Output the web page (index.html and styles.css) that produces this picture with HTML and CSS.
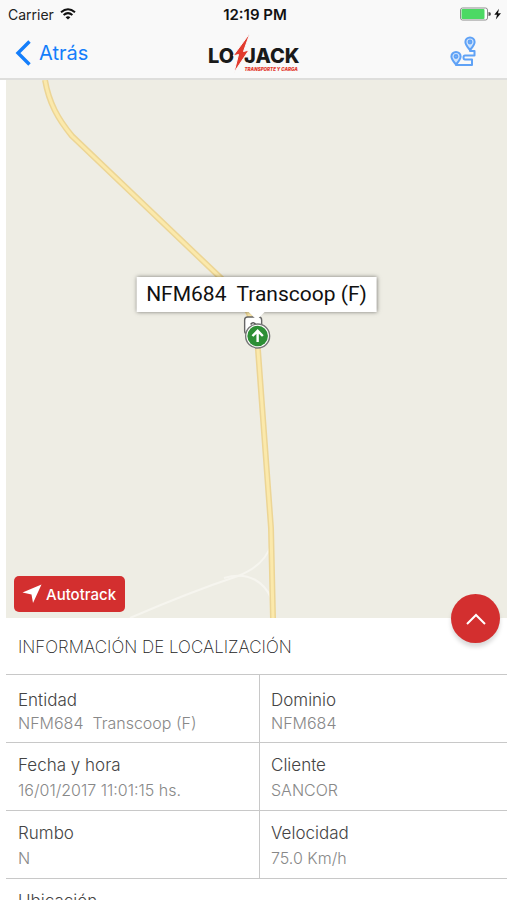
FILE: index.html
```html
<!DOCTYPE html>
<html lang="es">
<head>
    <meta charset="UTF-8">
    <meta name="viewport" content="width=device-width, initial-scale=1.0">
    <title>LoJack - Localización</title>
    <link rel="stylesheet" href="styles.css">
</head>
<body>
    <header class="topbar">
        <div class="status">
            <div class="carrier">
                <span>Carrier</span>
                <svg width="16" height="12" viewBox="0 0 16 12" fill="none" stroke="#111" stroke-width="2">
                    <path d="M1 4.3 Q8 -1.8 15 4.3"/>
                    <path d="M3.6 7 Q8 3.2 12.4 7"/>
                    <path d="M8 11.6 L5.6 9.2 Q8 7.2 10.4 9.2 Z" fill="#111" stroke="none"/>
                </svg>
            </div>
            <span class="time">12:19 PM</span>
            <div class="battery">
                <svg width="42" height="14" viewBox="0 0 42 14">
                    <rect x="0.5" y="1" width="27" height="12" rx="2" fill="#fff" stroke="#8c8c8c"/>
                    <rect x="1.5" y="2" width="23" height="10" rx="1" fill="#4cd964"/>
                    <path d="M28.5 5 Q31 5 31 7 Q31 9 28.5 9 Z" fill="#555"/>
                    <path d="M39 1.8 L34.3 7.8 H37 L35.8 12.4 L41 6.2 H38 Z" fill="#111"/>
                </svg>
            </div>
        </div>
        <nav class="navbar">
            <a class="back" href="#">
                <svg width="16" height="26" viewBox="0 0 16 26" fill="none" stroke="#147efb" stroke-width="3.4">
                    <path d="M14.5 1.5 L3 13 L14.5 24.5"/>
                </svg>
                Atrás
            </a>
            <svg class="logo" width="92" height="40" viewBox="0 0 184 80" role="img" aria-label="LoJack Transporte y Carga">
                <text class="logo-name" x="0" y="60">LO</text>
                <text class="logo-name" x="72" y="60">JACK</text>
                <path d="M84 0 L50 46 L61 43 L52 79 L82 34 L71 37 Z" fill="#e23b2e" stroke="#f9f9f9" stroke-width="2"/>
                <text class="logo-sub" x="73" y="75">TRANSPORTE Y CARGA</text>
            </svg>
            <button class="route" type="button" aria-label="Recorrido">
                <svg width="28" height="34" viewBox="0 0 28 34" fill="none" stroke="#5fa2f6" stroke-width="2" stroke-linejoin="round">
                    <path d="M20 14 C18 11.500 15.400 9 15.400 6 A4.600 4.600 0 0 1 24.600 6 C24.600 9 22 11.500 20 14 Z" fill="#cfe3fc"/>
                    <circle cx="20" cy="6" r="1.400"/>
                    <path d="M6 28.500 C4 26 1.400 23.500 1.400 20.500 A4.600 4.600 0 0 1 10.600 20.500 C10.600 23.500 8 26 6 28.500 Z" fill="#cfe3fc"/>
                    <circle cx="6" cy="20.500" r="1.400"/>
                    <path d="M20 14 V15 H24.500 V19.500 H15 Q13.500 19.500 13.500 21.500 Q13.500 23.500 15 23.500 H22 V29 H6 V27"/>
                </svg>
            </button>
        </nav>
    </header>

    <main>
        <section class="map">
            <svg class="roads" viewBox="0 0 501 538" fill="none">
                <path d="M124 538 C170 518 205 505 232 496 Q258 486 265 465" stroke="#f6f5ef" stroke-width="2"/>
                <path d="M218 498 C244 490 259 504 265 518" stroke="#f6f5ef" stroke-width="2"/>
                <path class="road-edge" d="M39 0 C43 23 52 39 66 56 L219 202 Q250 230 252 270 L265 448 L267 538"/>
                <path class="road-fill" d="M39 0 C43 23 52 39 66 56 L219 202 Q250 230 252 270 L265 448 L267 538"/>
            </svg>
            <div class="marker">
                <div class="tooltip">NFM684  Transcoop (F)</div>
                <svg class="pin" width="32" height="36" viewBox="0 0 32 36" fill="none">
                    <rect x="4" y="2" width="17" height="17" rx="3" fill="#fff" stroke="#666" stroke-width="1.4"/>
                    <path d="M10 9.500 Q12.500 6 15 9.500" stroke="#555" stroke-width="1.6"/>
                    <circle cx="17" cy="21" r="12" fill="#fff" stroke="#777" stroke-width="1.4"/>
                    <circle cx="17" cy="21" r="10.300" fill="#2d8f35"/>
                    <path d="M17 27 V16 M11.800 21 L17 15.800 L22.200 21" stroke="#fff" stroke-width="2.400"/>
                </svg>
            </div>
            <button class="autotrack" type="button">
                <svg width="20" height="20" viewBox="0 0 20 20" fill="#fff">
                    <path d="M19.500 0.500 L11 19 L9.500 10.500 L0.500 8.500 Z"/>
                </svg>
                Autotrack
            </button>
            <button class="expand" type="button" aria-label="Mostrar más">
                <svg width="22" height="14" viewBox="0 0 22 14" fill="none" stroke="#fff" stroke-width="2">
                    <path d="M2 12 L11 3 L20 12"/>
                </svg>
            </button>
        </section>

        <section class="info">
            <h2>INFORMACIÓN DE LOCALIZACIÓN</h2>
            <dl class="details">
                <div class="field compact">
                    <dt>Entidad</dt>
                    <dd>NFM684  Transcoop (F)</dd>
                </div>
                <div class="field compact">
                    <dt>Dominio</dt>
                    <dd>NFM684</dd>
                </div>
                <div class="field">
                    <dt>Fecha y hora</dt>
                    <dd>16/01/2017 11:01:15 hs.</dd>
                </div>
                <div class="field">
                    <dt>Cliente</dt>
                    <dd>SANCOR</dd>
                </div>
                <div class="field">
                    <dt>Rumbo</dt>
                    <dd>N</dd>
                </div>
                <div class="field">
                    <dt>Velocidad</dt>
                    <dd>75.0 Km/h</dd>
                </div>
                <div class="field wide">
                    <dt>Ubicación</dt>
                </div>
            </dl>
        </section>
    </main>
</body>
</html>
```

FILE: styles.css
```css
* {
    box-sizing: border-box;
}
body {
    margin: 0;
    height: 100vh;
    display: flex;
    flex-direction: column;
    overflow: hidden;
    background-color: #fff;
    font-family: Inter, "Liberation Sans", sans-serif;
    color: #444;
}
svg {
    display: block;
}
button {
    border: none;
    padding: 0;
    background: none;
    font-family: inherit;
    cursor: pointer;
}
.topbar {
    flex: none;
    background-color: #f9f9f9;
    border-bottom: 2px solid #dededc;
}
.status {
    display: grid;
    grid-template-columns: 1fr auto 1fr;
    align-items: center;
    height: 28px;
    padding: 0 5px 0 8px;
    font-size: 14px;
    color: #222;
}
.carrier {
    display: flex;
    align-items: center;
    gap: 6px;
}
.time {
    font-size: 15px;
    font-weight: 600;
    color: #111;
}
.battery {
    justify-self: end;
}
.navbar {
    display: grid;
    grid-template-columns: 1fr auto 1fr;
    align-items: center;
    height: 50px;
    padding: 0 15px;
}
.back {
    display: flex;
    align-items: center;
    gap: 8px;
    font-size: 20px;
    color: #147efb;
    text-decoration: none;
}
.route {
    justify-self: end;
    margin-right: 14px;
}
.logo-name {
    font-size: 40px;
    font-weight: 800;
    fill: #1a1a1a;
}
.logo-sub {
    font-size: 9px;
    font-weight: 900;
    font-style: italic;
    fill: #e23b2e;
}
main {
    flex: 1;
    min-height: 0;
    overflow: hidden;
    padding-left: 6px;
}
.map {
    position: relative;
    background-color: #eeede4;
}
.roads {
    width: 100%;
}
.road-edge {
    stroke: #ecd595;
    stroke-width: 6;
}
.road-fill {
    stroke: #fbe9ab;
    stroke-width: 3;
}
.marker {
    position: absolute;
    top: 197px;
    left: 50%;
    transform: translateX(-50%);
    display: flex;
    flex-direction: column;
    align-items: center;
    gap: 3px;
}
.tooltip {
    position: relative;
    z-index: 1;
    padding: 0 10px;
    background-color: #fff;
    box-shadow: 0 0 4px rgba(0, 0, 0, 0.5);
    font-family: Roboto, sans-serif;
    font-size: 21px;
    line-height: 35px;
    color: #111;
    white-space: pre;
}
.tooltip::after {
    content: "";
    position: absolute;
    top: 100%;
    left: 50%;
    margin-left: -8px;
    border: 8px solid transparent;
    border-top-color: #fff;
    border-bottom: none;
}
.autotrack {
    position: absolute;
    left: 8px;
    bottom: 6px;
    display: flex;
    align-items: center;
    gap: 4px;
    height: 36px;
    padding: 0 9px 0 8px;
    border-radius: 5px;
    background-color: #d32f2f;
    color: #fff;
    font-size: 15px;
    font-weight: 500;
}
.expand {
    position: absolute;
    right: 7px;
    bottom: -25px;
    display: flex;
    align-items: center;
    justify-content: center;
    width: 49px;
    height: 49px;
    border-radius: 50%;
    background-color: #d32f2f;
    box-shadow: 0 4px 4px rgba(0, 0, 0, 0.15);
}
h2 {
    margin: 0;
    padding: 2px 12px 0;
    font-size: 17px;
    font-weight: 200;
    line-height: 54px;
    color: #222;
}
.details {
    display: grid;
    grid-template-columns: 101fr 99fr;
    margin: 0;
}
.field {
    height: 68px;
    padding: 10px 12px 0;
    border-top: 1px solid #c8c8c8;
    line-height: 25px;
}
.field:nth-child(even) {
    padding-left: 11px;
    border-left: 1px solid #c8c8c8;
}
.compact {
    padding-top: 14px;
    line-height: 23px;
}
.wide {
    grid-column: 1 / -1;
}
dt {
    font-size: 17px;
    font-weight: 300;
}
dd {
    margin: 0;
    font-size: 16px;
    font-weight: 300;
    color: #888;
    white-space: pre;
}
```
